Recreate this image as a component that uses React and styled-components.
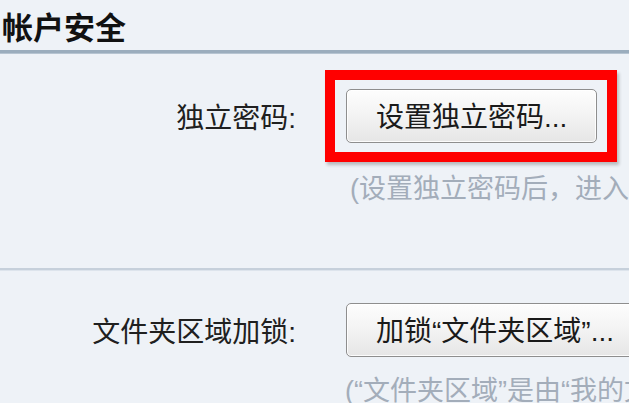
import React from "react";
import styled, { createGlobalStyle } from "styled-components";

const GlobalStyle = createGlobalStyle`
  html, body {
    margin: 0;
    padding: 0;
    background: #eef2f7;
  }
  body {
    font-family: "Liberation Sans", "Noto Sans CJK SC", sans-serif;
  }
`;

const Page = styled.div`
  width: 629px;
  height: 403px;
  overflow: hidden;
  background: #eef2f7;
  font-family: "Liberation Sans", "Noto Sans CJK SC", sans-serif;
  color: #1e1e1e;
`;

const Header = styled.div`
  height: 50px;
  padding: 3px 0 0 2px;
  box-sizing: border-box;
`;

const Title = styled.h1`
  margin: 0;
  font-size: 31px;
  font-weight: 700;
  line-height: normal;
  color: #111;
  white-space: nowrap;
`;

const Rule = styled.div`
  height: ${(p) => (p.$thick ? "4px" : "3px")};
  background: ${(p) => (p.$thick ? "#9badbd" : "#c6d0db")};
  border-bottom: 1px solid ${(p) => (p.$thick ? "#b6c4d1" : "#dde4ec")};
  box-sizing: border-box;
`;

const Section = styled.section`
  height: ${(p) => p.$height}px;
  padding-top: ${(p) => p.$top}px;
  box-sizing: border-box;
`;

const Row = styled.div`
  display: grid;
  grid-template-columns: 296px 1fr;
  column-gap: 29px;
  align-items: center;
`;

const Label = styled.div`
  font-size: 28px;
  text-align: right;
  white-space: nowrap;
  color: #202020;
`;

const Control = styled.div`
  display: flex;
  align-items: center;
  padding-left: ${(p) => p.$indent || 0}px;
  min-width: 0;
`;

const Highlight = styled.div`
  display: inline-flex;
  border: 10px solid #ff0000;
  padding: 9px 10px 9px 11px;
  box-shadow: 2px 3px 3px rgba(60, 60, 60, 0.3);
`;

const Button = styled.button`
  flex: none;
  height: 54px;
  padding: 4px 29px 0 29px;
  box-sizing: border-box;
  border: 1px solid #8e8e8e;
  border-radius: 5px;
  background: linear-gradient(#fdfdfd 0%, #f4f4f4 45%, #e6e6e6 100%);
  box-shadow: inset 0 0 0 1px rgba(255, 255, 255, 0.85);
  font-family: "Liberation Sans", "Noto Sans CJK SC", sans-serif;
  font-size: 28px;
  line-height: 1;
  color: #1a1a1a;
  white-space: nowrap;
  text-align: left;
  cursor: pointer;
`;

const Hint = styled.div`
  margin-top: ${(p) => p.$top}px;
  margin-left: ${(p) => 325 + p.$indent}px;
  font-size: 27px;
  line-height: 1.15;
  color: #a3adba;
  white-space: nowrap;
`;

export default function App() {
  return (
    <>
      <GlobalStyle />
      <Page>
        <Header>
          <Title>帐户安全</Title>
        </Header>
        <Rule $thick />
        <Section $height={214} $top={16}>
          <Row>
            <Label>独立密码:</Label>
            <Control>
              <Highlight>
                <Button>设置独立密码...</Button>
              </Highlight>
            </Control>
          </Row>
          <Hint $top={12} $indent={25}>(设置独立密码后，进入“我的文件夹”需要输入独立密码)</Hint>
        </Section>
        <Rule />
        <Section $height={132} $top={32}>
          <Row>
            <Label>文件夹区域加锁:</Label>
            <Control $indent={21}>
              <Button>加锁“文件夹区域”...</Button>
            </Control>
          </Row>
          <Hint $top={19} $indent={20}>(“文件夹区域”是由“我的文件夹”等组成)</Hint>
        </Section>
      </Page>
    </>
  );
}
